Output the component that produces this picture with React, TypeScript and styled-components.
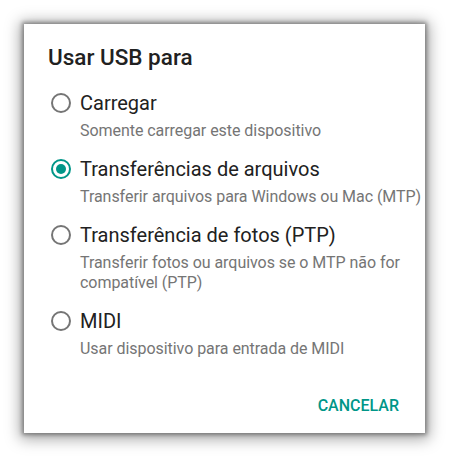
import React from 'react';
import styled, { createGlobalStyle } from 'styled-components';

const GlobalStyle = createGlobalStyle`
  body {
    margin: 0;
    background: #ffffff;
    font-family: Roboto, "Noto Sans", sans-serif;
  }
`;

const Page = styled.div`
  padding: 24px 25px 25px 24px;
`;

const Dialog = styled.div`
  width: 401px;
  height: 409px;
  box-sizing: border-box;
  background: #ffffff;
  box-shadow: 0 0 4px 2px rgba(0, 0, 0, 0.35), 0 2px 14px 4px rgba(0, 0, 0, 0.35);
  padding: 19px 0 0 24px;
  display: flex;
  flex-direction: column;
`;

const Title = styled.h2`
  margin: 0;
  font-size: 22.5px;
  line-height: 28px;
  font-weight: 500;
  color: #212121;
`;

const Options = styled.div`
  display: flex;
  flex-direction: column;
  gap: 16px;
  margin-top: 20px;
`;

const Option = styled.div`
  display: flex;
  flex-direction: column;
`;

const OptionRow = styled.div`
  display: flex;
  align-items: center;
  gap: 9px;
`;

const Radio = styled.span<{ $checked?: boolean }>`
  width: 20px;
  height: 20px;
  box-sizing: border-box;
  margin-left: 3px;
  border-radius: 50%;
  border: 2px solid ${(p) => (p.$checked ? '#009688' : '#757575')};
  display: flex;
  align-items: center;
  justify-content: center;

  &::after {
    content: '';
    width: 10px;
    height: 10px;
    border-radius: 50%;
    background: #009688;
    display: ${(p) => (p.$checked ? 'block' : 'none')};
  }
`;

const OptionLabel = styled.span`
  font-size: 20px;
  line-height: 24px;
  color: #212121;
`;

const OptionHint = styled.div`
  margin: 6px 0 0 32px;
  font-size: 16px;
  letter-spacing: -0.05px;
  line-height: 20px;
  color: #757575;
`;

const Actions = styled.div`
  display: flex;
  justify-content: flex-end;
  margin-top: 37px;
  padding-right: 26px;
`;

const TextButton = styled.button`
  border: none;
  background: none;
  padding: 0;
  font-family: Roboto, "Noto Sans", sans-serif;
  font-size: 16px;
  line-height: 20px;
  font-weight: 500;
  color: #009688;
`;

const options = [
  { label: 'Carregar', hint: 'Somente carregar este dispositivo' },
  { label: 'Transferências de arquivos', hint: 'Transferir arquivos para Windows ou Mac (MTP)', checked: true },
  { label: 'Transferência de fotos (PTP)', hint: 'Transferir fotos ou arquivos se o MTP não for compatível (PTP)' },
  { label: 'MIDI', hint: 'Usar dispositivo para entrada de MIDI' },
];

const App: React.FC = () => (
  <>
    <GlobalStyle />
    <Page>
      <Dialog>
        <Title>Usar USB para</Title>
        <Options>
          {options.map((o) => (
            <Option key={o.label}>
              <OptionRow>
                <Radio $checked={o.checked} />
                <OptionLabel>{o.label}</OptionLabel>
              </OptionRow>
              <OptionHint>{o.hint}</OptionHint>
            </Option>
          ))}
        </Options>
        <Actions>
          <TextButton>CANCELAR</TextButton>
        </Actions>
      </Dialog>
    </Page>
  </>
);

export default App;
